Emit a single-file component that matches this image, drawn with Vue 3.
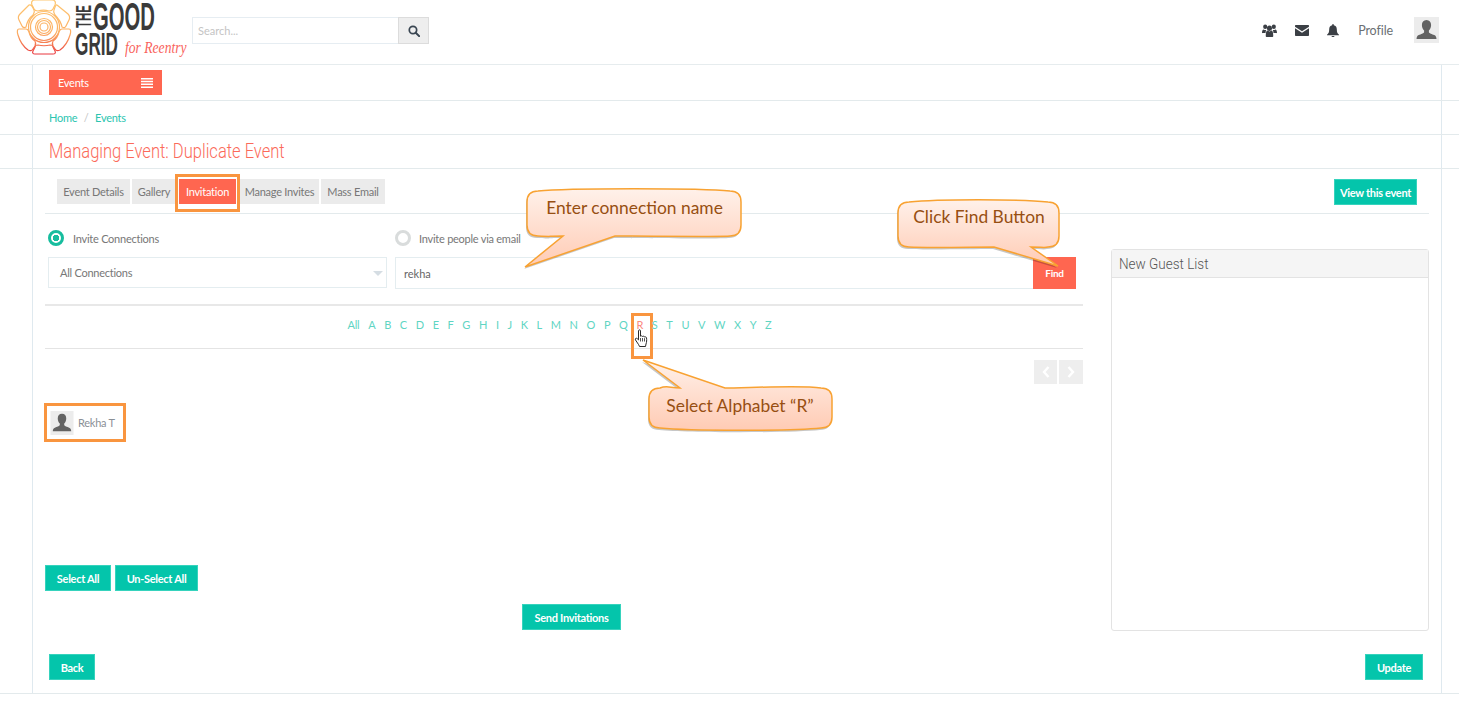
<script setup>
const letters = ['All', ...'ABCDEFGHIJKLMNOPQRSTUVWXYZ'.split('')]
const tabs = ['Event Details', 'Gallery', 'Invitation', 'Manage Invites', 'Mass Email']

// callout outline: body box plus a tail going to the tip
function calloutPath(c) {
  const { x0, y0, x1, y1, tail } = c
  const r = 11
  const bulge = 3
  let top = `L${x1 - r} ${y0}`
  let bottom = `L${x0 + r} ${y1}`
  if (tail.side === 'top') {
    top = `C${x0 + 18} ${y0 - bulge} ${tail.a - 10} ${y0} ${tail.a} ${y0} L${tail.tipX} ${tail.tipY} L${tail.b} ${y0} C${tail.b + 20} ${y0} ${x1 - 30} ${y0 - bulge} ${x1 - r} ${y0}`
    bottom = `C${x1 - 40} ${y1 + bulge} ${x0 + 40} ${y1 + bulge} ${x0 + r} ${y1}`
  } else {
    top = `C${x0 + 40} ${y0 - bulge} ${x1 - 40} ${y0 - bulge} ${x1 - r} ${y0}`
    bottom = `C${x1 - 14} ${y1 + 1} ${tail.b + 10} ${y1} ${tail.b} ${y1} L${tail.tipX} ${tail.tipY} L${tail.a} ${y1} C${tail.a - 20} ${y1} ${x0 + 30} ${y1 + 1} ${x0 + r} ${y1}`
  }
  return `M${x0 + r} ${y0} ${top} Q${x1} ${y0} ${x1} ${y0 + r} L${x1} ${y1 - r} Q${x1} ${y1} ${x1 - r} ${y1} ${bottom} Q${x0} ${y1} ${x0} ${y1 - r} L${x0} ${y0 + r} Q${x0} ${y0} ${x0 + r} ${y0} Z`
}

const callouts = [
  { text: 'Enter connection name', x0: 527, y0: 191, x1: 741, y1: 236, tx: 634.5, ty: 214, tail: { side: 'bottom', a: 563, b: 615, tipX: 525, tipY: 267 } },
  { text: 'Click Find Button', x0: 898, y0: 202, x1: 1059, y1: 247, tx: 979, ty: 223, tail: { side: 'bottom', a: 994, b: 1031, tipX: 1058, tipY: 266 } },
  { text: 'Select Alphabet “R”', x0: 649, y0: 388, x1: 832, y1: 428, tx: 740, ty: 412, tail: { side: 'top', a: 680, b: 725, tipX: 643, tipY: 360 } }
]
</script>

<template>
  <div class="page">
    <header class="topbar">
      <div class="logo">
        <svg class="flower" viewBox="0 0 56 56" width="56" height="56">
          <defs>
            <linearGradient id="petal" gradientUnits="userSpaceOnUse" x1="0" y1="0" x2="0" y2="56">
              <stop offset="0" stop-color="#fdc872" />
              <stop offset="0.6" stop-color="#fcae62" />
              <stop offset="0.8" stop-color="#f57a52" />
              <stop offset="1" stop-color="#e8303c" />
            </linearGradient>
          </defs>
          <g fill="none" stroke="url(#petal)" stroke-width="1.2">
            <path d="M19 1h17c3 0 4 2 3 5l-2 4c-1 2-2 2-4 2-3-1-8-1-11 0-2 0-3 0-4-2l-2-4c-1-3 0-5 3-5z" />
            <path d="M41 6l11 9c2 2 2 4 1 6l-3 6c-1 2-2 2-4 1-1-5-4-9-7-12-1-2-2-3-1-5 1-3 2-6 3-5z" />
            <path d="M13 6l-9 9c-2 2-2 4-1 6l3 6c1 2 2 2 4 1 1-5 3-9 7-12 1-2 2-3 1-5-1-3-3-6-5-5z" />
            <path d="M3 30h7c2 0 2 1 3 3 1 4 3 7 6 9 1 2 1 3 0 5l-2 3c-1 2-3 2-5 1-4-3-8-8-10-15-1-3-1-6 1-6z" />
            <path d="M53 30h-7c-2 0-2 1-3 3-1 4-3 7-6 9-1 2-1 3 0 5l2 3c1 2 3 2 5 1 4-3 8-8 10-15 1-3 1-6-1-6z" />
            <path d="M22 46c4 1 8 1 12 0 2 0 3 0 3 2l2 4c1 2 0 3-2 3H19c-2 0-3-1-2-3l2-4c0-2 1-2 3-2z" />
            <circle cx="28" cy="28" r="15.5" />
            <circle cx="28" cy="28" r="13.500" />
            <circle cx="28" cy="28" r="8.500" />
            <circle cx="28" cy="28" r="6.500" />
            <circle cx="28" cy="28" r="4" />
          </g>
        </svg>
        <span class="logo-the">THE</span>
        <span class="logo-good">GOOD</span>
        <span class="logo-grid">GRID</span>
        <span class="logo-for">for Reentry</span>
      </div>

      <div class="search">
        <input class="search-input" type="text" placeholder="Search..." />
        <button class="search-btn">
          <svg viewBox="0 0 14 14" width="12" height="12">
            <circle cx="5.8" cy="5.8" r="4.3" fill="none" stroke="#3a4652" stroke-width="2" />
            <path d="M9 9l4 4" stroke="#3a4652" stroke-width="2.4" stroke-linecap="round" />
          </svg>
        </button>
      </div>

      <nav class="top-right">
        <svg class="ic-users" viewBox="0 0 16 13" width="15" height="13" preserveAspectRatio="none">
          <g fill="#3b3f45">
            <circle cx="3.4" cy="2.8" r="2.200" />
            <circle cx="12.6" cy="2.8" r="2.200" />
            <circle cx="8" cy="4.2" r="2.700" />
            <path d="M0 9c0-2 .6-3.6 1.8-3.6.6.5 1.6.9 2.6.6-.4 1-.6 2-.6 3H.8C.3 9 0 9.400 0 9z" />
            <path d="M16 9c0-2-.6-3.600-1.800-3.600-.6.5-1.600.9-2.600.6.4 1 .6 2 .6 3h3C15.700 9 16 9.400 16 9z" />
            <path d="M4.800 13c-.5 0-.8-.4-.8-1 0-3.600.8-5.400 2-5.400.6.5 1.200.8 2 .8s1.400-.3 2-.8c1.200 0 2 1.800 2 5.400 0 .6-.3 1-.8 1z" />
          </g>
        </svg>
        <svg class="ic-mail" viewBox="0 0 14 11" width="14" height="11">
          <path fill="#3b3f45" d="M1 0h12c.6 0 1 .4 1 1v.7L7 6.200 0 1.700V1c0-.6.4-1 1-1z" />
          <path fill="#3b3f45" d="M0 3.300l7 4.500 7-4.500V10c0 .6-.4 1-1 1H1c-.6 0-1-.4-1-1z" />
        </svg>
        <svg class="ic-bell" viewBox="0 0 12 13" width="12" height="13">
          <path fill="#3b3f45" d="M6 0c.5 0 .8.3.8.8v.5C8.700 1.700 9.800 3.200 9.800 5.200c0 3 .7 4.300 2.200 5.500v.6H0v-.6c1.500-1.200 2.200-2.500 2.200-5.500 0-2 1.100-3.500 3-3.900V.8C5.200.3 5.500 0 6 0z" />
          <path fill="#3b3f45" d="M4.500 12h3C7.500 12.600 6.800 13 6 13s-1.500-.4-1.500-1z" />
        </svg>
        <span class="profile">Profile</span>
        <svg class="avatar avatar-top" viewBox="0 0 25 26">
          <rect width="25" height="26" fill="#ececec" />
          <path fill="#636363" d="M12.500 3c3 0 4.600 2.200 4.600 5 0 2.400-1 4.400-2.200 5.500v1.700c0 1 3.400 2 5.300 2.900 1.600.7 2.100 1.700 2.300 3.900H2.500c.2-2.200.7-3.200 2.300-3.900 1.900-.9 5.300-1.900 5.300-2.900v-1.700C8.900 12.400 7.900 10.400 7.900 8c0-2.800 1.600-5 4.600-5z" />
        </svg>
      </nav>
    </header>

    <div class="row">
      <div class="cell events-cell">
        <div class="events-btn">
          <span>Events</span>
          <svg viewBox="0 0 12 10" width="12" height="10">
            <path fill="#fff" d="M0 0h12v1.500H0zM0 2.800h12v1.500H0zM0 5.600h12v1.500H0zM0 8.400h12v1.500H0z" />
          </svg>
        </div>
      </div>
    </div>

    <div class="row">
      <div class="cell crumbs">
        <a>Home</a><span class="slash">/</span><a>Events</a>
      </div>
    </div>

    <div class="row">
      <div class="cell title-cell">
        <h1>Managing Event: Duplicate Event</h1>
      </div>
    </div>

    <div class="row">
      <div class="cell main-cell">
        <div class="tabs-row">
          <div class="tabs">
            <div v-for="t in tabs" :key="t" class="tab" :class="{ active: t === 'Invitation' }">{{ t }}</div>
          </div>
          <button class="btn view-btn">View this event</button>
        </div>

        <div class="columns">
          <section class="left">
            <div class="form-grid radios">
              <label class="radio-line"><i class="radio on"></i>Invite Connections</label>
              <label class="radio-line"><i class="radio"></i>Invite people via email</label>
            </div>
            <div class="form-grid controls">
              <div class="select">All Connections<i class="caret"></i></div>
              <div class="find-group">
                <input class="find-input" type="text" value="rekha" />
                <button class="find-btn">Find</button>
              </div>
            </div>

            <div class="alphabet">
              <a v-for="l in letters" :key="l" :class="{ picked: l === 'R' }">
                {{ l }}
                <template v-if="l === 'R'">
                  <span class="r-box"></span>
                  <svg class="hand" viewBox="0 0 15 19" width="15" height="19">
                    <path fill="#fff" stroke="#2b2b2b" stroke-width="1" stroke-linejoin="round" d="M4.500 1.800c0-1.300 2-1.300 2 0v5.400c.5-.5 1.800-.5 2 .3.500-.5 1.900-.4 2 .5.500-.4 1.900-.2 2 .8.300 2 .2 4.500-.5 6.200l-.5 2.500H5.500L4.600 15.600 1.500 11c-.8-1.300.6-2.400 1.700-1.400l1.300 1.300z" />
                    <path stroke="#2b2b2b" stroke-width=".8" d="M6.500 9v3.500M8.500 9v3.500M10.500 9.200v3.300" />
                  </svg>
                </template>
              </a>
            </div>

            <div class="pager">
              <button class="page-btn">
                <svg viewBox="0 0 8 12" width="8" height="12"><path d="M6.500 1L2 6l4.500 5" fill="none" stroke="#fff" stroke-width="2.400" /></svg>
              </button>
              <button class="page-btn">
                <svg viewBox="0 0 8 12" width="8" height="12"><path d="M1.500 1L6 6l-4.500 5" fill="none" stroke="#fff" stroke-width="2.400" /></svg>
              </button>
            </div>

            <div class="person">
              <svg class="avatar" viewBox="0 0 25 26">
                <rect width="25" height="26" fill="#ececec" />
                <path fill="#636363" d="M12.500 3c3 0 4.600 2.200 4.600 5 0 2.400-1 4.400-2.200 5.500v1.700c0 1 3.400 2 5.300 2.900 1.600.7 2.100 1.700 2.300 3.900H2.500c.2-2.200.7-3.200 2.300-3.900 1.900-.9 5.300-1.900 5.300-2.900v-1.700C8.900 12.400 7.900 10.400 7.900 8c0-2.800 1.600-5 4.600-5z" />
              </svg>
              <span>Rekha T</span>
            </div>

            <div class="select-btns">
              <button class="btn">Select All</button>
              <button class="btn">Un-Select All</button>
            </div>
            <div class="send-row">
              <button class="btn">Send Invitations</button>
            </div>
          </section>

          <aside class="guest">
            <div class="guest-head"><span>New Guest List</span></div>
          </aside>
        </div>

        <div class="foot">
          <button class="btn">Back</button>
          <button class="btn">Update</button>
        </div>
      </div>
    </div>

    <svg class="notes" width="1465" height="708" viewBox="0 0 1465 708">
      <defs>
        <linearGradient id="noteFill" x1="0" y1="0" x2="0" y2="1">
          <stop offset="0" stop-color="#fff1ea" />
          <stop offset="1" stop-color="#ffcbb4" />
        </linearGradient>
      </defs>
      <g v-for="c in callouts" :key="c.text">
        <path :d="calloutPath(c)" fill="#000" opacity=".22" transform="translate(-1 2)" />
        <path :d="calloutPath(c)" fill="#fff" />
        <path :d="calloutPath(c)" fill="url(#noteFill)" stroke="#f8a232" stroke-width="1.500" />
        <text :x="c.tx" :y="c.ty" text-anchor="middle" class="note-text">{{ c.text }}</text>
      </g>
    </svg>
  </div>
</template>

<style>
html, body { margin: 0; background: #fff; }
</style>

<style scoped>
.page {
  position: relative;
  width: 1465px;
  height: 708px;
  overflow: hidden;
  background: #fff;
  font-family: "Lato", "Noto Sans", sans-serif;
  font-size: 11px;
  letter-spacing: -.25px;
  color: #777;
}
button { font-family: inherit; cursor: pointer; letter-spacing: inherit; }

/* top bar */
.topbar {
  width: 1459px;
  height: 64px;
  border-bottom: 1px solid #e6ecee;
  display: flex;
  align-items: flex-start;
  box-sizing: content-box;
}
.logo { position: relative; width: 192px; height: 64px; flex: none; color: #3a3a3a; font-family: "Liberation Sans", sans-serif; font-weight: 700; letter-spacing: 0; }
.flower { position: absolute; left: 16px; top: -1px; }
.logo span { position: absolute; display: block; line-height: .78; white-space: nowrap; transform-origin: left top; }
.logo-the { left: 75px; top: 28px; font-size: 22px; transform: rotate(-90deg) scaleX(.52); }
.logo-good { left: 93px; top: 2px; font-size: 39px; transform: scaleX(.52); }
.logo-grid { left: 75px; top: 33px; font-size: 31px; transform: scaleX(.555); }
.logo-for { left: 125px; top: 41px; font-family: "Liberation Serif", serif; font-weight: 400; font-style: italic; font-size: 17px; color: #f9635c; transform: scaleX(.8); }

.search { display: flex; margin-top: 17px; width: 237px; height: 27px; }
.search-input {
  width: 206px; height: 27px; box-sizing: border-box; padding: 0 5px;
  border: 1px solid #e6edf2; border-right: none; outline: none;
  font-family: inherit; font-size: 11px; background: #fff;
}
.search-input::placeholder { color: #c4c4c4; }
.search-btn { width: 31px; height: 27px; border: 1px solid #dcdcdc; background: #eee; padding: 0; display: flex; align-items: center; justify-content: center; }

.top-right { margin-left: auto; display: flex; align-items: center; height: 26px; margin-top: 17px; margin-right: 20px; }
.ic-users { margin-right: 18px; }
.ic-mail { margin-right: 18px; }
.ic-bell { margin-right: 19px; }
.profile { font-size: 12.500px; color: #6b6f73; margin-right: 21px; letter-spacing: -.1px; }
.avatar { width: 24px; height: 24px; display: block; flex: none; }
.avatar-top { width: 25px; height: 26px; }

/* framed rows */
.row { width: 1459px; border-bottom: 1px solid #e3eaec; }
.cell {
  margin: 0 17px 0 32px;
  box-sizing: border-box;
  border-left: 1px solid #dfe9ef;
  border-right: 1px solid #dfe9ef;
}
.events-cell { height: 35px; padding: 5px 0 0 16px; }
.events-btn {
  width: 113px; height: 25px; box-sizing: border-box; padding: 0 9px;
  background: #ff6650; color: #fff; font-size: 11px;
  display: flex; align-items: center; justify-content: space-between;
}
.crumbs { height: 33px; padding-left: 16px; display: flex; align-items: center; font-size: 11px; }
.crumbs a { color: #2bc5b0; }
.slash { color: #c4c4c4; margin: 0 6.500px; }
.title-cell { height: 33px; padding-left: 16px; display: flex; align-items: center; }
h1 {
  margin: 0; font-family: "Roboto", sans-serif; font-weight: 300;
  font-size: 19.500px; letter-spacing: 0; color: #fb6a5a; white-space: nowrap;
  transform: scaleX(.848); transform-origin: left center;
}

/* main */
.tabs-row {
  margin: 0 12px;
  height: 44px;
  box-sizing: content-box;
  border-bottom: 1px solid #e3eaec;
  display: flex;
  align-items: flex-start;
  justify-content: space-between;
}
.tabs { display: flex; margin: 10px 0 0 12px; gap: 2px; }
.tab { height: 25px; line-height: 25px; background: #ebebeb; color: #777; font-size: 11px; position: relative; white-space: nowrap; text-align: center; }
.tab:nth-child(1) { width: 73px; }
.tab:nth-child(2) { width: 44px; }
.tab:nth-child(4) { width: 79px; }
.tab:nth-child(5) { width: 64px; }
.tab.active { width: 57px; background: #ff6650; color: #fff; margin: 0 2px 0 1px; }
.tab.active::after { content: ""; position: absolute; inset: -5px -4px -8px -4px; border: 3px solid #f9953f; }
.view-btn { margin: 10px 12px 0 0; width: 83px; height: 24px; padding: 0; }

.columns { display: grid; grid-template-columns: 1038px 318px; gap: 28px; margin-left: 12px; }
.left { min-width: 0; }
.form-grid { display: grid; grid-template-columns: 339px 681px; column-gap: 8px; margin-left: 3px; }
.radios { margin-top: 16px; height: 16px; }
.radio-line { display: flex; align-items: center; font-size: 11px; color: #777; }
.radio { width: 16px; height: 16px; box-sizing: border-box; border-radius: 50%; border: 3px solid #d9dcdc; margin-right: 8px; flex: none; }
.radio.on { border-color: #17bd9e; background: radial-gradient(circle, #17bd9e 0 3px, #fff 3.500px); margin-right: 9px; }
.controls { margin-top: 11px; height: 32px; }
.select {
  height: 31px; box-sizing: border-box; border: 1px solid #e4edf0; padding-left: 11px;
  display: flex; align-items: center; position: relative; font-size: 11px; color: #777;
}
.caret { position: absolute; right: 3px; top: 13px; border: 5px solid transparent; border-top: 5px solid #d5dde3; border-bottom: none; }
.find-group { display: flex; height: 32px; }
.find-input {
  width: 638px; height: 32px; box-sizing: border-box; border: 1px solid #e4edf0; border-right: none;
  padding: 0 8px; outline: none; font-family: inherit; font-size: 11px; color: #666;
}
.find-btn { width: 43px; height: 32px; padding: 0; border: none; background: #ff6650; color: #fff; font-size: 10px; font-weight: 700; }

.alphabet {
  margin-top: 15px; height: 36px; box-sizing: content-box;
  border-top: 2px solid #e8e8e8; border-bottom: 1px solid #e4e4e4;
  display: flex; align-items: center; justify-content: center; gap: 8.800px; padding: 0 9px 6px 0;
  font-size: 11px; color: #5fd5c3;
}
.alphabet a { position: relative; }
.alphabet a.picked { color: #fb8a7e; }
.r-box { position: absolute; left: -5px; top: -5px; width: 22px; height: 46px; box-sizing: border-box; border: 3px solid #f9953f; }
.hand { position: absolute; left: -2px; top: 11px; }

.pager { display: flex; justify-content: flex-end; gap: 2px; margin-top: 11px; height: 24px; }
.page-btn { width: 23px; height: 24px; padding: 0; border: none; background: #eee; display: flex; align-items: center; justify-content: center; }
.page-btn + .page-btn { width: 24px; }

.person {
  margin-top: 19px; margin-left: -1px; width: 82px; height: 39px; box-sizing: border-box;
  border: 3px solid #f9953f; padding-left: 3px; display: flex; align-items: center; gap: 4px;
  font-size: 11px; color: #8a8f96; white-space: nowrap;
}
.select-btns { display: flex; gap: 4px; margin-top: 123px; }
.select-btns .btn:first-child { width: 66px; }
.select-btns .btn:last-child { width: 83px; }
.send-row { margin-top: 13px; margin-left: 477px; }
.send-row .btn { width: 99px; }

.btn {
  height: 26px; padding: 0; border: 1px solid #36d3bd; background: #04c5ab; color: #fff;
  font-size: 11px; font-weight: 700; white-space: nowrap; letter-spacing: -.3px;
}
.guest { margin-top: 35px; height: 382px; box-sizing: border-box; border: 1px solid #e3e3e3; border-radius: 3px; }
.guest-head {
  height: 28px; box-sizing: border-box; border-bottom: 1px solid #e3e3e3; background: #f5f5f5;
  padding-left: 7px; line-height: 29px; font-family: "Roboto", sans-serif; font-weight: 300;
  font-size: 15px; letter-spacing: 0; color: #555;
}
.guest-head span { display: inline-block; transform: scaleX(.9); transform-origin: left center; white-space: nowrap; }
.foot { display: flex; justify-content: space-between; padding: 23px 18px 13px 16px; }
.foot .btn:first-child { width: 46px; }
.foot .btn:last-child { width: 58px; }

/* annotation callouts */
.notes { position: absolute; left: 0; top: 0; pointer-events: none; }
.note-text { font-family: "Lato", sans-serif; font-size: 17.400px; letter-spacing: 0; fill: #974f12; }
</style>
